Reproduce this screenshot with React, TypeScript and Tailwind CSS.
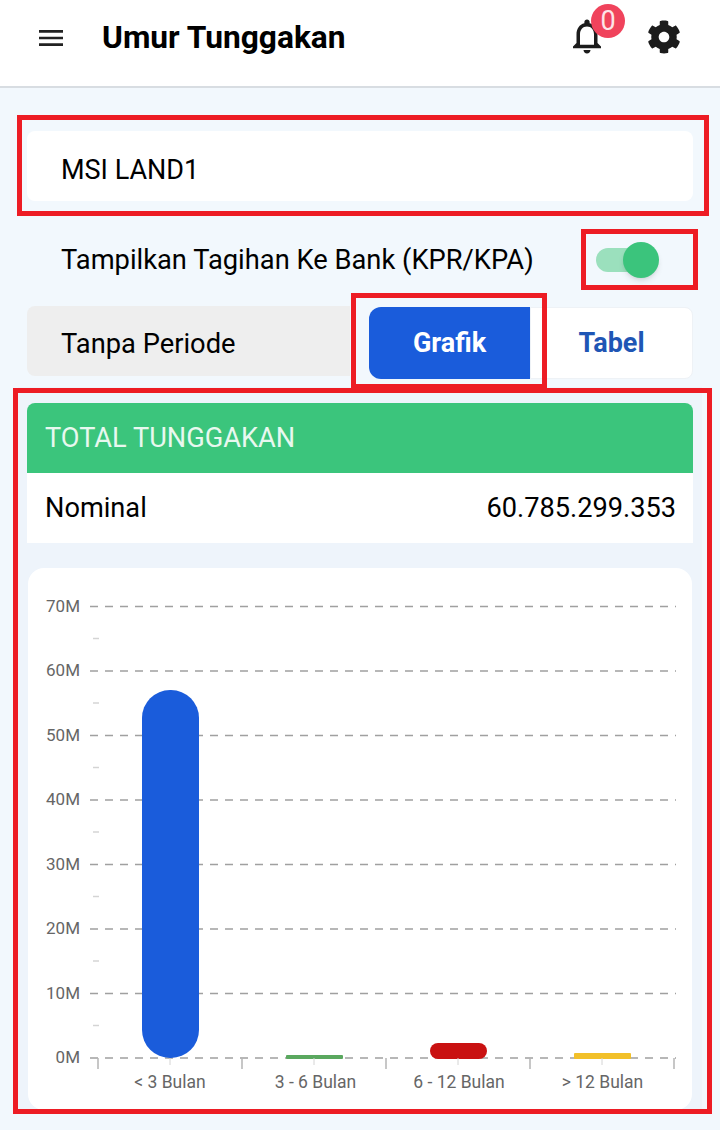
import React from 'react';
import { FaCog } from 'react-icons/fa';

const TICKS = [
  { label: '70M', y: 606.5 },
  { label: '60M', y: 671 },
  { label: '50M', y: 735.5 },
  { label: '40M', y: 800 },
  { label: '30M', y: 864.5 },
  { label: '20M', y: 929 },
  { label: '10M', y: 993.5 },
  { label: '0M', y: 1058 },
];

const BARS = [
  { label: '< 3 Bulan', x: 142, y: 690, h: 368, r: 28, color: '#1a5cdb', center: 170, labelX: 170 },
  { label: '3 - 6 Bulan', x: 286, y: 1055, h: 4, r: 1, color: '#5aa85f', center: 314, labelX: 315.5 },
  { label: '6 - 12 Bulan', x: 430, y: 1043, h: 16, r: 8, color: '#c91111', center: 458, labelX: 459 },
  { label: '> 12 Bulan', x: 574, y: 1053, h: 6, r: 1, color: '#f2c029', center: 602, labelX: 602.5 },
];

const CHART_TOP = 568;

const Chart = () => (
  <svg width="664" height="542" viewBox={`28 ${CHART_TOP} 664 542`} className="block">
    {TICKS.map((t, i) => (
      <g key={t.label}>
        <text x="80" y={t.y + 5} textAnchor="end" fontSize="17" fill="#666666">{t.label}</text>
        <line x1="90" x2="676" y1={t.y} y2={t.y} stroke="#a0a0a0" strokeWidth="1.5" strokeDasharray="8 7" />
        {i < TICKS.length - 1 && (
          <line x1="93" x2="99" y1={t.y + 32} y2={t.y + 32} stroke="#d4d4d4" strokeWidth="1.5" />
        )}
      </g>
    ))}
    {[98, 242, 386, 530, 674].map(x => (
      <line key={x} x1={x} x2={x} y1="1058" y2="1069" stroke="#b4b4b4" strokeWidth="1.5" />
    ))}
    {BARS.map(b => (
      <g key={b.label}>
        <rect x={b.x} y={b.y} width="57" height={b.h} rx={b.r} fill={b.color} />
        <line x1={b.center} x2={b.center} y1="1058" y2="1065" stroke="#d4d4d4" strokeWidth="1" />
        <text x={b.labelX} y="1088" textAnchor="middle" fontSize="17.5" fill="#666666">{b.label}</text>
      </g>
    ))}
  </svg>
);

const App: React.FC = () => {
  return (
    <div className="relative h-[1130px] w-[720px] overflow-hidden bg-[#f2f8fd] font-['Roboto',sans-serif] text-black">
      <header className="flex h-[88px] items-start border-b-2 border-[#d8dde2] bg-white">
        <svg viewBox="0 0 24 24" className="ml-[35px] mt-[22px] h-[32px] w-[32px]" fill="#222222">
          <path d="M3 18h18v-2H3v2zm0-5h18v-2H3v2zm0-7v2h18V6H3z" />
        </svg>
        <h1 className="ml-[35px] mt-[19px] text-[31.7px] leading-[38px] font-bold">Umur Tunggakan</h1>
        <div className="relative ml-auto mt-[15px]">
          <svg viewBox="0 0 24 24" className="h-[42px] w-[42px]" fill="#1c1c1c">
            <path d="M12 22c1.1 0 2-.9 2-2h-4c0 1.1.9 2 2 2zm6-6v-5c0-3.07-1.63-5.64-4.5-6.32V4c0-.83-.67-1.5-1.5-1.5s-1.5.67-1.5 1.5v.68C7.64 5.36 6 7.92 6 11v5l-2 2v1h16v-1l-2-2zm-2 1H8v-6c0-2.48 1.51-4.5 4-4.5s4 2.02 4 4.5v6z" />
          </svg>
          <span className="absolute left-[25px] top-[-11px] flex h-[34px] w-[34px] items-center justify-center rounded-full bg-[#f0435c] text-[27px] text-[#fde4e8]">0</span>
        </div>
        <FaCog className="ml-[39px] mr-[39px] mt-[20px] h-[34px] w-[34px] text-[#1c1c1c]" />
      </header>

      <main className="px-[27px] pt-[43px]">
        <div className="flex h-[70px] items-center rounded-lg bg-white pl-[34px] pt-[8px] text-[27px]">MSI LAND1</div>

        <div className="flex h-[105px] items-center justify-between pl-[34px] pr-[33px] pt-[13px]">
          <span className="text-[27.3px]">Tampilkan Tagihan Ke Bank (KPR/KPA)</span>
          <div className="relative h-[24px] w-[64px]">
            <div className="h-[24px] w-[44px] rounded-full bg-[#9be0bd]" />
            <div className="absolute left-[27px] top-[-6px] h-[36px] w-[36px] rounded-full bg-[#3bc47c] shadow-md" />
          </div>
        </div>

        <div className="flex h-[72px]">
          <div className="flex h-[70px] w-[323px] items-center rounded-l-lg bg-[#eeeeee] pl-[34px] pt-[7px] text-[27.3px]">Tanpa Periode</div>
          <button className="ml-[19px] mt-px h-[72px] w-[161px] rounded-l-xl bg-[#1a5cdb] text-[27px] font-bold text-white">Grafik</button>
          <button className="mt-px h-[72px] flex-1 rounded-r-lg border border-[#eef2f6] bg-white text-[27px] font-bold text-[#1f56b5]">Tabel</button>
        </div>

        <section className="-mx-[9px] mt-[9px] bg-[#eef4fb] px-[9px] pt-[16px]">
          <div className="flex h-[70px] items-center rounded-t-lg bg-[#3bc57c] pl-[18px] text-[27.2px] text-[#e8f8ef]">TOTAL TUNGGAKAN</div>
          <div className="flex h-[70px] items-center justify-between bg-white pl-[18px] pr-[17px] text-[27.2px]">
            <span>Nominal</span>
            <span>60.785.299.353</span>
          </div>
          <div className="mx-px mt-[25px] rounded-2xl bg-white">
            <Chart />
          </div>
        </section>
      </main>

      {/* annotation boxes */}
      <div className="absolute left-[17px] top-[115px] h-[101px] w-[692px] border-[5px] border-[#ed1c24]" />
      <div className="absolute left-[581px] top-[229px] h-[61px] w-[117px] border-[5px] border-[#ed1c24]" />
      <div className="absolute left-[351px] top-[293px] h-[96px] w-[196px] border-[5px] border-[#ed1c24]" />
      <div className="absolute left-[13px] top-[388px] h-[726px] w-[699px] border-[5px] border-[#ed1c24]" />
    </div>
  );
};

export default App;
